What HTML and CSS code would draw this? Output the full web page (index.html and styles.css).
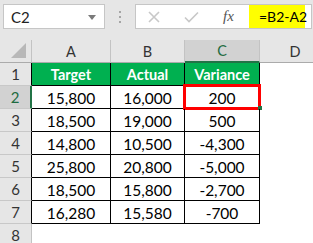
FILE: index.html
```html
<!DOCTYPE html>
<html>
<head>
<meta charset="utf-8">
<link rel="stylesheet" href="styles.css">
</head>
<body>
<div class="toolbar">
  <div class="namebox">
    <span class="ref">C2</span>
    <svg class="drop" width="8" height="5" viewBox="0 0 8 5"><path d="M0 0H8L4 5Z" fill="#7a7a7a"/></svg>
  </div>
  <div class="dots"><i></i><i></i><i></i></div>
  <div class="fbar">
    <div class="icons">
      <svg class="ico-x" width="12" height="12" viewBox="0 0 12 12"><path d="M1 1L11 11M11 1L1 11" stroke="#c8c8c8" stroke-width="1.6" fill="none"/></svg>
      <svg class="ico-ok" width="15" height="12" viewBox="0 0 15 12"><path d="M1 6.5L5 10.5L14 1.5" stroke="#c8c8c8" stroke-width="1.6" fill="none"/></svg>
      <span class="fx">fx</span>
    </div>
    <div class="formula">=B2-A2</div>
  </div>
</div>
<div class="sheet">
  <div class="ch corner"><svg width="16" height="15" viewBox="0 0 16 15"><path d="M15 0V15H0Z" fill="#b8b8b8"/></svg></div>
  <div class="ch">A</div>
  <div class="ch">B</div>
  <div class="ch sel">C</div>
  <div class="ch last">D</div>

  <div class="rh">1</div>
  <div class="c hd">Target</div>
  <div class="c hd">Actual</div>
  <div class="c hd">Variance</div>
  <div class="e"></div>

  <div class="rh rsel">2</div>
  <div class="c">15,800</div>
  <div class="c">16,000</div>
  <div class="c active">200<span class="redbox"></span><span class="handle"></span></div>
  <div class="e"></div>

  <div class="rh">3</div>
  <div class="c">18,500</div>
  <div class="c">19,000</div>
  <div class="c">500</div>
  <div class="e"></div>

  <div class="rh">4</div>
  <div class="c">14,800</div>
  <div class="c">10,500</div>
  <div class="c">-4,300</div>
  <div class="e"></div>

  <div class="rh">5</div>
  <div class="c">25,800</div>
  <div class="c">20,800</div>
  <div class="c">-5,000</div>
  <div class="e"></div>

  <div class="rh">6</div>
  <div class="c">18,500</div>
  <div class="c">15,800</div>
  <div class="c">-2,700</div>
  <div class="e"></div>

  <div class="rh">7</div>
  <div class="c">16,280</div>
  <div class="c">15,580</div>
  <div class="c">-700</div>
  <div class="e"></div>

  <div class="rh r8">8</div>
  <div class="e"></div>
  <div class="e"></div>
  <div class="e"></div>
  <div class="e"></div>
</div>
</body>
</html>
```
FILE: styles.css
```css
* { box-sizing: border-box; }
html, body { margin: 0; padding: 0; }
body {
  width: 313px;
  height: 243px;
  overflow: hidden;
  background: #fff;
  font-family: Lato, "Liberation Sans", sans-serif;
  color: #000;
}
.toolbar {
  height: 40px;
  background: #e6e6e6;
  display: flex;
  align-items: flex-start;
  padding: 4px 1px 0 3px;
}
.namebox {
  width: 102px;
  height: 25px;
  background: #fff;
  border: 1px solid #c6c6c6;
  display: flex;
  align-items: center;
  justify-content: space-between;
  padding: 0 8px 0 7px;
}
.ref { font-size: 15px; color: #222; }
.drop { margin-top: 1px; }
.dots {
  width: 30px;
  height: 25px;
  display: flex;
  flex-direction: column;
  align-items: center;
  justify-content: center;
  gap: 3px;
}
.dots i {
  display: block;
  width: 2px;
  height: 2px;
  background: #a5a5a5;
}
.fbar {
  flex: 1;
  height: 25px;
  background: #fff;
  border: 1px solid #c6c6c6;
  display: flex;
}
.icons {
  width: 113px;
  display: flex;
  align-items: center;
  padding-left: 12px;
}
.ico-x { margin-right: 24px; }
.ico-ok { margin-right: 24px; margin-top: 1px; }
.fx {
  font-family: "Liberation Serif", serif;
  font-style: italic;
  font-size: 15px;
  color: #555;
}
.formula {
  width: 56px;
  background: #ffff00;
  font-size: 14px;
  display: flex;
  align-items: center;
  padding-left: 10px;
  white-space: nowrap;
}
.sheet {
  width: 313px;
  overflow: hidden;
  display: grid;
  grid-template-columns: 32px 79px 74px 75px 1fr;
  grid-auto-rows: 23px;
  font-size: 15.5px;
}
.ch {
  background: #e6e6e6;
  border-right: 1px solid #c3c3c3;
  border-bottom: 1px solid #ababab;
  display: flex;
  align-items: center;
  justify-content: center;
  font-size: 14.5px;
  color: #333;
}
.ch.last { border-right: none; padding-left: 17px; }
.ch.sel {
  background: #d2d2d2;
  color: #1e6b41;
  border-bottom: 2px solid #217346;
}
.corner {
  align-items: flex-end;
  justify-content: flex-end;
  padding: 0 4px 4px 0;
}
.corner svg { display: block; }
.rh {
  background: #e6e6e6;
  border-right: 1px solid #000;
  border-bottom: 1px solid #c8c8c8;
  display: flex;
  align-items: center;
  justify-content: center;
  font-size: 15px;
  color: #333;
}
.rh.rsel {
  background: #d2d2d2;
  color: #1e6b41;
  border-right: 2px solid #217346;
}
.rh.r8 { border-right: 1px solid #c3c3c3; }
.c {
  border-right: 1px solid #000;
  border-bottom: 1px solid #000;
  display: flex;
  align-items: center;
  justify-content: center;
  position: relative;
  padding-top: 1px;
}
.c.hd {
  background: #00b050;
  color: #fff;
  font-weight: bold;
  font-size: 14.5px;
}
.redbox {
  position: absolute;
  left: -2px;
  top: -2px;
  width: 78px;
  height: 26px;
  border: 3px solid #ff0000;
}
.handle {
  position: absolute;
  right: -3px;
  bottom: -2px;
  width: 4px;
  height: 4px;
  background: #217346;
}
```
